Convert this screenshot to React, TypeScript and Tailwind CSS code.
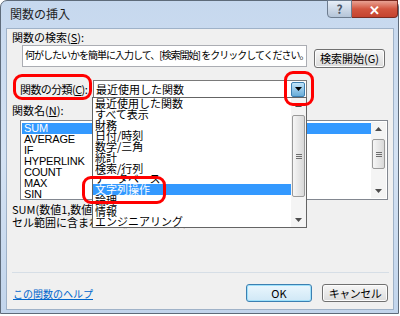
const jp = "font-['Noto_Sans_CJK_JP',sans-serif]";
const latin = "font-['Liberation_Sans','Noto_Sans_CJK_JP',sans-serif]";

const categories = [
  "最近使用した関数",
  "すべて表示",
  "財務",
  "日付/時刻",
  "数学/三角",
  "統計",
  "検索/行列",
  "データベース",
  "文字列操作",
  "論理",
  "情報",
  "エンジニアリング",
];

const functions = ["SUM", "AVERAGE", "IF", "HYPERLINK", "COUNT", "MAX", "SIN"];

const Arrow = ({ up = false }: { up?: boolean }) => (
  <svg width="7" height="4" viewBox="0 0 7 4" className="block">
    <path d={up ? "M0 4 L3.5 0 L7 4 Z" : "M0 0 L7 0 L3.5 4 Z"} fill="#4d4d4d" />
  </svg>
);

const ScrollBar = ({ thumbTop, thumbHeight }: { thumbTop: number; thumbHeight: number }) => (
  <div className="relative flex h-full w-[15px] shrink-0 flex-col items-center justify-between bg-[#f4f4f4] py-[5px]">
    <Arrow up />
    <Arrow />
    <div
      className="absolute left-[1px] flex w-[13px] flex-col items-center justify-center gap-[1px] rounded-[2px] border border-[#9a9a9a] bg-gradient-to-r from-[#f6f6f6] to-[#d9d9d9]"
      style={{ top: thumbTop, height: thumbHeight }}
    >
      <div className="h-px w-[6px] bg-[#6e6e6e]" />
      <div className="h-px w-[6px] bg-[#6e6e6e]" />
      <div className="h-px w-[6px] bg-[#6e6e6e]" />
    </div>
  </div>
);

const Button = ({ label, primary = false, className = "" }: { label: string; primary?: boolean; className?: string }) => (
  <div
    className={`flex items-center justify-center whitespace-nowrap rounded-[3px] border text-[11px] leading-none text-black ${
      primary
        ? "border-[#3c7fb1] bg-gradient-to-b from-[#eaf6fd] to-[#d0e8f6] shadow-[inset_0_0_0_1px_#9ee1fb]"
        : "border-[#707070] bg-gradient-to-b from-[#f6f6f6] to-[#dcdcdc] shadow-[inset_0_0_0_1px_#fcfcfc]"
    } ${className}`}
  >
    {label}
  </div>
);

const RedRing = ({ className }: { className: string }) => (
  <div className={`pointer-events-none absolute rounded-[9px] border-[3px] border-[#ff0000] ${className}`} />
);

export default function App() {
  return (
    <div className={`h-[316px] w-[400px] overflow-hidden bg-white ${jp}`}>
      <div className="relative h-[314px] w-[399px] rounded-t-[7px] border border-[#5e6b7a] bg-gradient-to-b from-[#c6d8ee] via-[#d4e2f3] to-[#c2d5ec] pl-[5px]">
        {/* title bar */}
        <div className="flex h-[27px] items-start justify-between">
          <span className="mt-[5px] pl-[4px] text-[12px] leading-[16px] text-[#1e1e1e]">関数の挿入</span>
          <div className="-mt-px flex h-[18px]">
            <div className="flex w-[25px] items-center justify-center rounded-bl-[4px] border border-[#6d7c8f] bg-gradient-to-b from-[#e7eef7] to-[#b4c4d8] text-[12px] font-bold leading-none text-[#4a5566]">
              ?
            </div>
            <div className="flex w-[46px] items-center justify-center rounded-br-[4px] border border-l-0 border-[#7a2a20] bg-gradient-to-b from-[#e8a193] via-[#d2553f] to-[#c4432f] text-[13px] font-bold leading-none text-white">
              ✕
            </div>
          </div>
        </div>

        {/* content */}
        <div className="relative h-[282px] w-[388px] border border-[#9fb2c8] bg-[#f0f0f0] text-[11px] text-black">
          <div className="flex flex-col pl-[5px]">
            <span className="mt-[1px] leading-[14px]">
              関数の検索(<span className="underline">S</span>):
            </span>
            <div className="mt-px flex items-start">
              <div className="ml-[10px] h-[22px] w-[285px] whitespace-nowrap border border-[#abadb3] bg-white pl-[2px] pt-[2px] text-[10px] leading-[14px] tracking-[-1px]">
                何がしたいかを簡単に入力して、[検索開始] をクリックしてください。
              </div>
              <Button label="検索開始(G)" className="ml-[7px] mt-[4px] h-[19px] w-[71px]" />
            </div>

            <div className="mt-[12px] flex items-center">
              <span className="ml-[8px] w-[73px] whitespace-nowrap leading-[14px] tracking-[-0.6px]">
                関数の分類(<span className="underline">C</span>):
              </span>
              <div className="flex h-[18px] w-[214px] items-center justify-between border border-[#7a7a7a] bg-white pl-[2px] pr-px">
                <span className="leading-[14px]">最近使用した関数</span>
                <div className="flex h-[15px] w-[14px] items-center justify-center rounded-[2px] border border-[#3c7fb1] bg-gradient-to-b from-[#c0e4f9] to-[#68acd8]">
                  <svg width="7" height="4" viewBox="0 0 7 4">
                    <path d="M0 0 L7 0 L3.5 4 Z" fill="#000" />
                  </svg>
                </div>
              </div>
            </div>

            <span className="mt-[5px] leading-[14px]">
              関数名(<span className="underline">N</span>):
            </span>

            <div className="ml-[8px] mt-[3px] flex h-[80px] w-[368px] border border-[#828790] bg-white p-px">
              <div className={`flex grow flex-col pt-px ${latin} text-[11px] tracking-[-0.2px]`}>
                {functions.map((f, i) => (
                  <div
                    key={f}
                    className={`h-[11px] pl-[2px] leading-[11px] ${i === 0 ? "bg-[#3399ff] text-white" : ""}`}
                  >
                    {f}
                  </div>
                ))}
              </div>
              <ScrollBar thumbTop={17} thumbHeight={30} />
            </div>

            <div className="mt-[3px] flex flex-col whitespace-nowrap leading-[13px]">
              <span>SUM(数値1,数値2,...)</span>
              <span>セル範囲に含まれる数値をすべて合計します。</span>
            </div>
          </div>

          {/* footer */}
          <div className="absolute bottom-0 left-0 right-0 flex flex-col px-[5px]">
            <div className="h-px w-[377px] bg-[#d6dee6]" />
            <div className="mt-[11px] mb-[7px] flex items-center justify-between">
              <span className="ml-px text-[10px] leading-[13px] text-[#0066cc] underline">この関数のヘルプ</span>
              <div className="flex gap-[10px]">
                <Button label="OK" primary className="h-[18px] w-[66px]" />
                <Button label="キャンセル" className="h-[18px] w-[66px] tracking-[-0.5px]" />
              </div>
            </div>
          </div>

          {/* open dropdown list */}
          <div className="absolute left-[85px] top-[68px] flex h-[131px] w-[215px] border border-[#646464] bg-white">
            <div className="flex grow flex-col">
              {categories.map((c, i) => (
                <div
                  key={c}
                  className={`h-[10.75px] pl-[2px] text-[11px] leading-[11px] ${i === 8 ? "bg-[#3399ff] text-white" : ""}`}
                >
                  {c}
                </div>
              ))}
            </div>
            <ScrollBar thumbTop={17} thumbHeight={82} />
          </div>

          <RedRing className="left-[6px] top-[45px] h-[26px] w-[79px]" />
          <RedRing className="left-[277px] top-[42px] h-[35px] w-[30px]" />
          <RedRing className="left-[75px] top-[147px] h-[28px] w-[84px]" />
        </div>
      </div>
    </div>
  );
}
